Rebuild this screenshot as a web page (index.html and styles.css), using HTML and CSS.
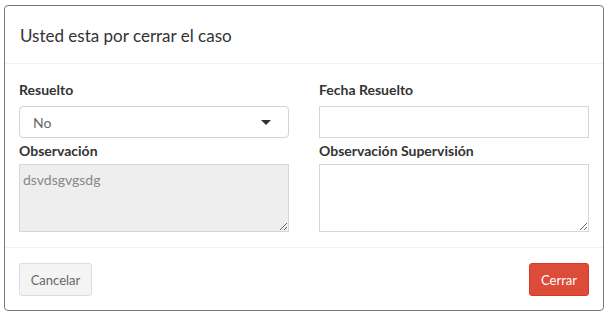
FILE: index.html
```html
<!DOCTYPE html>
<html lang="es">
<head>
<meta charset="utf-8">
<title>Cerrar caso</title>
<link rel="stylesheet" href="styles.css">
</head>
<body>
<div class="modal">
  <div class="modal-header">
    <h4 class="modal-title">Usted esta por cerrar el caso</h4>
  </div>
  <div class="modal-body">
    <div class="field">
      <label class="label">Resuelto</label>
      <div class="select">
        <span class="select-value">No</span>
        <span class="caret"></span>
      </div>
    </div>
    <div class="field">
      <label class="label">Fecha Resuelto</label>
      <input class="input" type="text">
    </div>
    <div class="field">
      <label class="label label-second">Observación</label>
      <textarea class="textarea textarea-disabled" readonly>dsvdsgvgsdg</textarea>
    </div>
    <div class="field">
      <label class="label label-second">Observación Supervisión</label>
      <textarea class="textarea"></textarea>
    </div>
  </div>
  <div class="modal-footer">
    <button class="btn btn-default" type="button">Cancelar</button>
    <button class="btn btn-danger" type="button">Cerrar</button>
  </div>
</div>
</body>
</html>
```
FILE: styles.css
```css
* { box-sizing: border-box; }
html, body {
  margin: 0;
  padding: 0;
  background: #ffffff;
}
body {
  font-family: Lato, "Open Sans", "Liberation Sans", sans-serif;
  color: #333333;
}
.modal {
  margin: 5px 0 0 4px;
  width: 600px;
  border: 1px solid #7a7a7a;
  border-radius: 4px;
  background: #ffffff;
}
.modal-header {
  padding: 17px 15px 14px 15px;
  border-bottom: 1px solid #f2f2f2;
}
.modal-title {
  margin: 0;
  font-size: 17px;
  line-height: 26px;
  font-weight: 400;
  color: #333333;
}
.modal-body {
  padding: 16px 14px 15px 14px;
  display: grid;
  grid-template-columns: 270px 270px;
  column-gap: 30px;
}
.field {
  display: flex;
  flex-direction: column;
}
.label {
  display: block;
  font-size: 14px;
  line-height: 20px;
  font-weight: 700;
  color: #333333;
  margin-bottom: 6px;
}
.label-second {
  margin-top: 3px;
  margin-bottom: 3px;
}
.select {
  height: 32px;
  border: 1px solid #cfd3da;
  border-radius: 4px;
  display: flex;
  align-items: center;
  justify-content: space-between;
  padding: 0 17px 0 13px;
}
.select-value {
  font-size: 14px;
  color: #666666;
}
.caret {
  width: 0;
  height: 0;
  border-left: 5px solid transparent;
  border-right: 5px solid transparent;
  border-top: 5px solid #333333;
}
.input {
  height: 32px;
  border: 1px solid #d2d6de;
  border-radius: 0;
  margin: 0;
  padding: 6px 12px;
  font: inherit;
  font-size: 14px;
  outline: none;
}
.textarea {
  height: 68px;
  border: 1px solid #d2d6de;
  border-radius: 0;
  margin: 0;
  padding: 5px 3px;
  font-family: inherit;
  font-size: 14px;
  line-height: 20px;
  color: #888888;
  resize: vertical;
  outline: none;
  background: #ffffff;
}
.textarea-disabled {
  background: #eeeeee;
}
.modal-footer {
  border-top: 1px solid #f2f2f2;
  padding: 15px 14px 14px 14px;
  display: flex;
  justify-content: space-between;
}
.btn {
  height: 33px;
  font-family: inherit;
  font-size: 13px;
  border-radius: 3px;
  cursor: pointer;
}
.btn-default {
  width: 73px;
  background: #f4f4f4;
  border: 1px solid #dddddd;
  color: #666666;
}
.btn-danger {
  width: 60px;
  background: #dd4b39;
  border: 1px solid #d73925;
  color: #ffffff;
}
```
